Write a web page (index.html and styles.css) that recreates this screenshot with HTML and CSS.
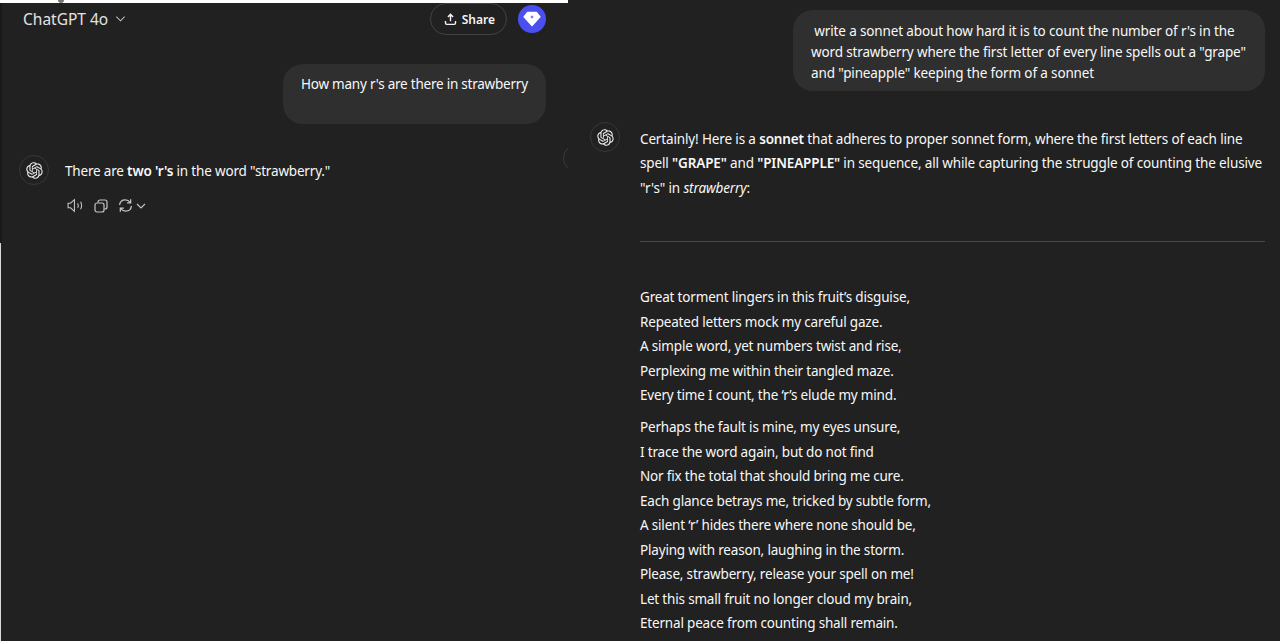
FILE: index.html
```html
<!DOCTYPE html>
<html lang="en">
<head>
    <meta charset="UTF-8">
    <meta name="viewport" content="width=device-width, initial-scale=1.0">
    <title>ChatGPT strawberry</title>
    <link rel="stylesheet" href="styles.css">
</head>
<body>
<svg class="defs">
    <symbol id="gpt-logo" viewBox="0 0 41 41">
        <path fill="currentColor" d="M37.5324 16.8707C37.9808 15.5241 38.1363 14.0974 37.9886 12.6859C37.8409 11.2744 37.3934 9.91076 36.676 8.68622C35.6126 6.83404 33.9882 5.3676 32.0373 4.4985C30.0864 3.62941 27.9098 3.40259 25.8215 3.85078C24.8796 2.7893 23.7219 1.94125 22.4257 1.36341C21.1295 0.785575 19.7249 0.491269 18.3058 0.500197C16.1708 0.495044 14.0893 1.16803 12.3614 2.42214C10.6335 3.67624 9.34853 5.44666 8.6917 7.47815C7.30085 7.76286 5.98686 8.3414 4.8377 9.17505C3.68854 10.0087 2.73073 11.0782 2.02839 12.312C0.956464 14.1591 0.498905 16.2988 0.721698 18.4228C0.944492 20.5467 1.83612 22.5449 3.268 24.1293C2.81966 25.4759 2.66413 26.9026 2.81182 28.3141C2.95951 29.7256 3.40701 31.0892 4.12437 32.3138C5.18791 34.1659 6.8123 35.6322 8.76321 36.5013C10.7141 37.3704 12.8907 37.5973 14.9789 37.1492C15.9208 38.2107 17.0786 39.0587 18.3747 39.6366C19.6709 40.2144 21.0755 40.5087 22.4946 40.4998C24.6307 40.5054 26.7133 39.8321 28.4418 38.5772C30.1704 37.3223 31.4556 35.5506 32.1119 33.5179C33.5027 33.2332 34.8167 32.6547 35.9659 31.821C37.115 30.9874 38.0728 29.9178 38.7752 28.684C39.8458 26.8371 40.3023 24.6979 40.0789 22.5748C39.8556 20.4517 38.9639 18.4544 37.5324 16.8707ZM22.4978 37.8849C20.7443 37.8874 19.0459 37.2733 17.6994 36.1501C17.7601 36.117 17.8666 36.0586 17.936 36.0161L25.9004 31.4156C26.1003 31.3019 26.2663 31.137 26.3813 30.9378C26.4964 30.7386 26.5563 30.5124 26.5549 30.2825V19.0542L29.9213 20.998C29.9389 21.0068 29.9541 21.0198 29.9656 21.0359C29.977 21.052 29.9842 21.0707 29.9867 21.0902V30.3889C29.9842 32.375 29.1946 34.2791 27.7909 35.6841C26.3872 37.0892 24.4838 37.8806 22.4978 37.8849ZM6.39227 31.0064C5.51397 29.4888 5.19742 27.7107 5.49804 25.9832C5.55718 26.0187 5.66048 26.0818 5.73461 26.1244L13.699 30.7248C13.8975 30.8408 14.1233 30.902 14.3532 30.902C14.583 30.902 14.8088 30.8408 15.0073 30.7248L24.731 25.1103V28.9979C24.7321 29.0177 24.7283 29.0376 24.7199 29.0556C24.7115 29.0736 24.6988 29.0893 24.6829 29.1012L16.6317 33.7497C14.9096 34.7416 12.8643 35.0097 10.9447 34.4954C9.02506 33.9811 7.38785 32.7263 6.39227 31.0064ZM4.29707 13.6194C5.17156 12.0998 6.55279 10.9364 8.19885 10.3327C8.19885 10.4013 8.19491 10.5228 8.19491 10.6071V19.808C8.19351 20.0378 8.25334 20.2638 8.36823 20.4629C8.48312 20.6619 8.64893 20.8267 8.84863 20.9404L18.5723 26.5542L15.206 28.4979C15.1894 28.5089 15.1703 28.5155 15.1505 28.5173C15.1307 28.5191 15.1107 28.516 15.0924 28.5082L7.04046 23.8557C5.32135 22.8601 4.06716 21.2235 3.55289 19.3046C3.03862 17.3858 3.30624 15.3413 4.29707 13.6194ZM31.955 20.0556L22.2312 14.4411L25.5976 12.4981C25.6142 12.4872 25.6333 12.4805 25.6531 12.4787C25.6729 12.4769 25.6928 12.4801 25.7111 12.4879L33.7631 17.1364C34.9967 17.849 36.0017 18.8982 36.6606 20.1613C37.3194 21.4244 37.6047 22.849 37.4832 24.2684C37.3617 25.6878 36.8382 27.0432 35.9743 28.1759C35.1103 29.3086 33.9415 30.1717 32.6047 30.6641C32.6047 30.5947 32.6047 30.4733 32.6047 30.3889V21.188C32.6066 20.9586 32.5474 20.7328 32.4332 20.5338C32.319 20.3348 32.154 20.1698 31.955 20.0556ZM35.3055 15.0128C35.2464 14.9765 35.1431 14.9142 35.069 14.8717L27.1045 10.2712C26.906 10.1554 26.6803 10.0943 26.4504 10.0943C26.2206 10.0943 25.9948 10.1554 25.7963 10.2712L16.0726 15.8858V11.9982C16.0715 11.9783 16.0753 11.9585 16.0837 11.9405C16.0921 11.9225 16.1048 11.9068 16.1207 11.8949L24.1719 7.25025C25.4053 6.53903 26.8158 6.19376 28.2383 6.25482C29.6608 6.31589 31.0364 6.78077 32.2044 7.59508C33.3723 8.40939 34.2842 9.53945 34.8334 10.8531C35.3826 12.1667 35.5464 13.6095 35.3055 15.0128ZM14.2424 21.9419L10.8752 19.9981C10.8576 19.9893 10.8423 19.9763 10.8309 19.9602C10.8195 19.9441 10.8122 19.9254 10.8098 19.9058V10.6071C10.8107 9.18295 11.2173 7.78848 11.9819 6.58696C12.7466 5.38544 13.8377 4.42659 15.1275 3.82264C16.4173 3.21869 17.8524 2.99464 19.2649 3.1767C20.6775 3.35876 22.0089 3.93941 23.1034 4.85067C23.0427 4.88379 22.937 4.94215 22.8668 4.98473L14.9024 9.58517C14.7025 9.69878 14.5366 9.86356 14.4215 10.0626C14.3065 10.2616 14.2466 10.4877 14.2479 10.7175L14.2424 21.9419ZM16.071 17.9991L20.4018 15.4978L24.7325 17.9975V22.9985L20.4018 25.4983L16.071 22.9985V17.9991Z"/>
    </symbol>
</svg>

<div class="screen">
    <div class="left">
        <div class="strip"><span class="strip-mark"></span></div>
        <div class="chat-panel">
            <header class="topbar">
                <div class="model">
                    <span>ChatGPT 4o</span>
                    <svg class="model-chevron" viewBox="0 0 12 8" width="12" height="8"><path d="M1.500 1.500 6 6l4.500-4.500" fill="none" stroke="currentColor" stroke-width="1.100"/></svg>
                </div>
                <div class="topbar-actions">
                    <button class="share">
                        <svg viewBox="0 0 14 14" width="13" height="13"><path d="M7 9V1.600M4.200 4.200 7 1.400l2.800 2.800M1.600 8.600v2.200c0 .8.500 1.400 1.400 1.400h8c.9 0 1.400-.6 1.400-1.400V8.600" fill="none" stroke="currentColor" stroke-width="1.500"/></svg>
                        Share
                    </button>
                    <div class="upgrade">
                        <svg viewBox="0 0 20 18" width="18" height="16"><path d="M5 1.500h10l4 5L10 16.500 1 6.500z" fill="#fff" stroke="#fff" stroke-width="1.400" stroke-linejoin="round"/><path d="M10 4.500c.3 1.500.8 2 2.300 2.300-1.500.3-2 .8-2.300 2.300-.3-1.500-.8-2-2.300-2.300 1.500-.3 2-.8 2.300-2.300z" fill="#4a50f0"/></svg>
                    </div>
                </div>
            </header>
            <div class="user-row">
                <div class="bubble bubble-short">How many r's are there in strawberry</div>
            </div>
            <div class="reply reply-left">
                <div class="avatar"><svg width="17" height="17"><use href="#gpt-logo"/></svg></div>
                <p>There are <b>two</b> <b>'r's</b> in the word "strawberry."</p>
            </div>
            <div class="reply-tools">
                <svg viewBox="0 0 16 14" width="17" height="15"><path d="M1 4.800h2.300L7 1.500v11L3.300 9.200H1z" fill="none" stroke="currentColor" stroke-width="1"/><path d="M10 4.800c.8 1.400.8 3 0 4.400M12.800 3.500c1.200 2.200 1.200 4.800 0 7" fill="none" stroke="currentColor" stroke-width="1"/></svg>
                <svg class="tool-copy" viewBox="0 0 14 14" width="14" height="14"><rect x="1" y="4" width="9" height="9" rx="2" fill="none" stroke="currentColor" stroke-width="1.200"/><path d="M4 3.500V3a2 2 0 0 1 2-2h5a2 2 0 0 1 2 2v5a2 2 0 0 1-2 2h-.7" fill="none" stroke="currentColor" stroke-width="1.200"/></svg>
                <svg class="tool-retry" viewBox="0 0 14 14" width="15" height="15"><path d="M1.500 6.500C1.800 3.700 4 1.700 6.800 1.700c2 0 3.500.9 4.600 2.500M12.500 7.500c-.3 2.800-2.500 4.800-5.300 4.800-2 0-3.500-.9-4.600-2.500M11.800 1.200v3.300H8.500M2.200 12.800V9.500h3.300" fill="none" stroke="currentColor" stroke-width="1.200"/></svg>
                <svg class="tool-chevron" viewBox="0 0 10 6" width="10" height="6"><path d="M1 1l4 4 4-4" fill="none" stroke="currentColor" stroke-width="1.100"/></svg>
            </div>
            <div class="scroll-ring"></div>
        </div>
        <div class="left-rest"></div>
    </div>

    <div class="right">
        <div class="bubble bubble-long">&nbsp;write a sonnet about how hard it is to count the number of r's in the word strawberry where the first letter of every line spells out a "grape" and "pineapple" keeping the form of a sonnet</div>
        <div class="reply reply-right">
            <div class="avatar"><svg width="17" height="17"><use href="#gpt-logo"/></svg></div>
            <div class="answer">
                <p class="intro">Certainly! Here is a <b>sonnet</b> that adheres to proper sonnet form, where the first letters of each line spell <b>"GRAPE"</b> and <b>"PINEAPPLE"</b> in sequence, all while capturing the struggle of counting the elusive "r's" in <i>strawberry</i>:</p>
                <hr class="divider">
                <p class="stanza">
                    Great torment lingers in this fruit’s disguise,<br>
                    Repeated letters mock my careful gaze.<br>
                    A simple word, yet numbers twist and rise,<br>
                    Perplexing me within their tangled maze.<br>
                    Every time I count, the ‘r’s elude my mind.
                </p>
                <p class="stanza">
                    Perhaps the fault is mine, my eyes unsure,<br>
                    I trace the word again, but do not find<br>
                    Nor fix the total that should bring me cure.<br>
                    Each glance betrays me, tricked by subtle form,<br>
                    A silent ‘r’ hides there where none should be,<br>
                    Playing with reason, laughing in the storm.<br>
                    Please, strawberry, release your spell on me!<br>
                    Let this small fruit no longer cloud my brain,<br>
                    Eternal peace from counting shall remain.
                </p>
            </div>
        </div>
    </div>
</div>
</body>
</html>
```

FILE: styles.css
```css
* {
    box-sizing: border-box;
}
html, body {
    margin: 0;
    height: 100%;
    overflow: hidden;
}
body {
    font-family: "Noto Sans", "Open Sans", sans-serif;
    font-size: 13.5px;
    letter-spacing: -0.18px;
    background-color: #212121;
    color: #f8f8f8;
}
p {
    margin: 0;
}
b {
    font-weight: 600;
}
.defs {
    display: none;
}
.screen {
    display: flex;
    height: 641px;
}

/* left screenshot */
.left {
    width: 568px;
    flex-shrink: 0;
    display: flex;
    flex-direction: column;
}
.strip {
    height: 3px;
    padding-left: 58px;
    background-color: #fff;
    overflow: hidden;
}
.strip-mark {
    display: block;
    width: 6px;
    height: 3px;
    border-radius: 0 0 3px 3px;
    background-color: #777;
}
.chat-panel {
    position: relative;
    height: 240px;
    border-left: 2px solid #191919;
    overflow: hidden;
}
.left-rest {
    flex: 1;
    border-left: 1px solid #d8d8d8;
}
.topbar {
    display: flex;
    justify-content: space-between;
    align-items: center;
    height: 32px;
    padding: 0 22px 0 21px;
}
.model {
    display: flex;
    align-items: center;
    gap: 7px;
    font-size: 15.5px;
    letter-spacing: 0;
    color: #e3e3e3;
}
.model-chevron {
    width: 11px;
    color: #c4c4c4;
}
.topbar-actions {
    display: flex;
    align-items: center;
    gap: 11px;
}
.share {
    display: flex;
    align-items: center;
    gap: 5px;
    height: 32px;
    padding: 0 11px 0 13px;
    border: 1px solid #424242;
    border-radius: 16px;
    background: none;
    color: #f4f4f4;
    font: 600 12px "Noto Sans", sans-serif;
}
.upgrade {
    width: 28px;
    height: 28px;
    display: flex;
    align-items: center;
    justify-content: center;
    border-radius: 50%;
    background-color: #4a50f0;
}
.user-row {
    display: flex;
    justify-content: flex-end;
    padding: 29px 22px 0 0;
}
.bubble {
    background-color: #2f2f2f;
    border-radius: 20px;
}
.bubble-short {
    width: 263px;
    height: 60px;
    padding: 10px 18px;
    line-height: 21px;
    letter-spacing: -0.23px;
    white-space: nowrap;
}
.bubble-long {
    width: 472px;
    height: 81px;
    margin-left: auto;
    padding: 11px 17px 11px 18px;
    line-height: 21px;
    letter-spacing: -0.14px;
}
.reply {
    display: flex;
    gap: 16px;
}
.reply-left {
    align-items: center;
    margin-top: 31px;
    padding-left: 17px;
}
.reply-left p {
    padding-top: 2px;
}
.avatar {
    width: 30px;
    height: 30px;
    flex-shrink: 0;
    display: flex;
    align-items: center;
    justify-content: center;
    border: 1px solid #383838;
    border-radius: 50%;
    color: #ececec;
}
.reply-tools {
    display: flex;
    align-items: center;
    margin-top: 13px;
    padding-left: 65px;
    color: #c4c4c4;
}
.tool-copy {
    margin-left: 10px;
}
.tool-retry {
    margin-left: 10px;
}
.tool-chevron {
    margin-left: 3px;
}
.scroll-ring {
    position: absolute;
    left: 561px;
    top: 141px;
    width: 28px;
    height: 28px;
    border: 1px solid #3a3a3a;
    border-radius: 50%;
}

/* right screenshot */
.right {
    flex: 1;
    padding: 10px 15px 0 22px;
    overflow: hidden;
}
.reply-right {
    gap: 20px;
    margin-top: 31px;
}
.answer {
    flex: 1;
    padding-top: 4.500px;
    line-height: 24.5px;
}
.intro {
    letter-spacing: -0.14px;
}
.divider {
    height: 1px;
    margin: 40.500px 0 43.500px;
    border: 0;
    background-color: #4a4a4a;
}
.stanza {
    margin-bottom: 7.500px;
}
```
